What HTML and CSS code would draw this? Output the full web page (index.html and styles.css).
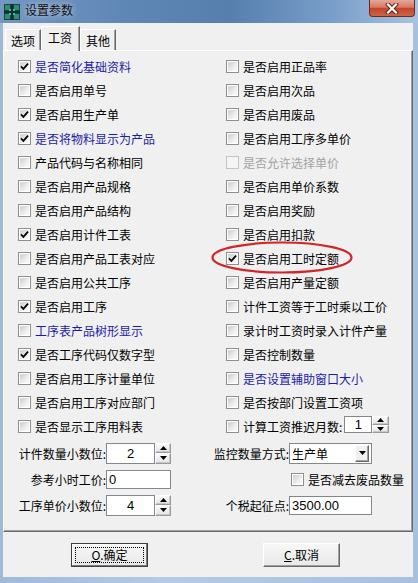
FILE: index.html
```html
<!DOCTYPE html>
<html lang="zh-CN">
<head>
    <meta charset="UTF-8">
    <title>设置参数</title>
    <link rel="stylesheet" href="styles.css">
</head>
<body>
    <div class="window">
        <div class="titlebar">
            <svg class="app-icon" width="16" height="16" viewBox="0 0 16 16">
                <rect x="0" y="0" width="16" height="16" fill="#17463e"/>
                <rect x="1" y="1" width="5" height="5" fill="#2f8c78"/>
                <rect x="10" y="1" width="5" height="5" fill="#2f8c78"/>
                <rect x="1" y="10" width="5" height="5" fill="#2f8c78"/>
                <rect x="10" y="10" width="5" height="5" fill="#2f8c78"/>
                <rect x="5" y="5" width="6" height="6" fill="#4fb39b"/>
                <rect x="7" y="0" width="2" height="16" fill="#0f312b"/>
                <rect x="0" y="7" width="16" height="2" fill="#0f312b"/>
            </svg>
            <span class="title">设置参数</span>
            <div class="close-btn">
                <svg width="14" height="11" viewBox="0 0 14 11">
                    <path d="M3 1.5 L11 9.5 M11 1.5 L3 9.5" stroke="#5a1d16" stroke-width="4" stroke-linecap="square"/>
                    <path d="M3 1.5 L11 9.5 M11 1.5 L3 9.5" stroke="#fff" stroke-width="2.2" stroke-linecap="square"/>
                </svg>
            </div>
        </div>

        <div class="client">
            <div class="tabs">
                <div class="tab">选项</div>
                <div class="tab active">工资</div>
                <div class="tab">其他</div>
            </div>

            <div class="panel">
                <div class="options">
                    <!-- left column -->
                    <label class="opt blue"><span class="cb"><svg viewBox="0 0 9 9"><path d="M1 4.3 L3.4 6.8 L8 1.6"/></svg></span>是否简化基础资料</label>
                    <label class="opt"><span class="cb"></span>是否启用单号</label>
                    <label class="opt"><span class="cb"><svg viewBox="0 0 9 9"><path d="M1 4.3 L3.4 6.8 L8 1.6"/></svg></span>是否启用生产单</label>
                    <label class="opt blue"><span class="cb"><svg viewBox="0 0 9 9"><path d="M1 4.3 L3.4 6.8 L8 1.6"/></svg></span>是否将物料显示为产品</label>
                    <label class="opt"><span class="cb"></span>产品代码与名称相同</label>
                    <label class="opt"><span class="cb"></span>是否启用产品规格</label>
                    <label class="opt"><span class="cb"></span>是否启用产品结构</label>
                    <label class="opt"><span class="cb"><svg viewBox="0 0 9 9"><path d="M1 4.3 L3.4 6.8 L8 1.6"/></svg></span>是否启用计件工表</label>
                    <label class="opt"><span class="cb"></span>是否启用产品工表对应</label>
                    <label class="opt"><span class="cb"></span>是否启用公共工序</label>
                    <label class="opt"><span class="cb"><svg viewBox="0 0 9 9"><path d="M1 4.3 L3.4 6.8 L8 1.6"/></svg></span>是否启用工序</label>
                    <label class="opt blue"><span class="cb"></span>工序表产品树形显示</label>
                    <label class="opt"><span class="cb"><svg viewBox="0 0 9 9"><path d="M1 4.3 L3.4 6.8 L8 1.6"/></svg></span>是否工序代码仅数字型</label>
                    <label class="opt"><span class="cb"></span>是否启用工序计量单位</label>
                    <label class="opt"><span class="cb"></span>是否启用工序对应部门</label>
                    <label class="opt"><span class="cb"></span>是否显示工序用料表</label>

                    <!-- right column -->
                    <label class="opt"><span class="cb"></span>是否启用正品率</label>
                    <label class="opt"><span class="cb"></span>是否启用次品</label>
                    <label class="opt"><span class="cb"></span>是否启用废品</label>
                    <label class="opt"><span class="cb"></span>是否启用工序多单价</label>
                    <label class="opt disabled"><span class="cb"></span>是否允许选择单价</label>
                    <label class="opt"><span class="cb"></span>是否启用单价系数</label>
                    <label class="opt"><span class="cb"></span>是否启用奖励</label>
                    <label class="opt"><span class="cb"></span>是否启用扣款</label>
                    <label class="opt"><span class="cb"><svg viewBox="0 0 9 9"><path d="M1 4.3 L3.4 6.8 L8 1.6"/></svg></span>是否启用工时定额</label>
                    <label class="opt"><span class="cb"></span>是否启用产量定额</label>
                    <label class="opt"><span class="cb"></span>计件工资等于工时乘以工价</label>
                    <label class="opt"><span class="cb"></span>录计时工资时录入计件产量</label>
                    <label class="opt"><span class="cb"></span>是否控制数量</label>
                    <label class="opt blue"><span class="cb"></span>是否设置辅助窗口大小</label>
                    <label class="opt"><span class="cb"></span>是否按部门设置工资项</label>
                    <div class="opt">
                        <span class="cb"></span>计算工资推迟月数:
                        <div class="spin small">
                            <span class="field center">1</span>
                            <span class="spin-btns">
                                <span><svg width="7" height="4" viewBox="0 0 7 4"><path d="M0 4 L3.5 0 L7 4 Z"/></svg></span>
                                <span><svg width="7" height="4" viewBox="0 0 7 4"><path d="M0 0 L7 0 L3.5 4 Z"/></svg></span>
                            </span>
                        </div>
                    </div>
                </div>

                <div class="lower">
                    <div class="row">
                        <span class="lbl left-lbl">计件数量小数位:</span>
                        <div class="spin">
                            <span class="field center">2</span>
                            <span class="spin-btns">
                                <span><svg width="7" height="4" viewBox="0 0 7 4"><path d="M0 4 L3.5 0 L7 4 Z"/></svg></span>
                                <span><svg width="7" height="4" viewBox="0 0 7 4"><path d="M0 0 L7 0 L3.5 4 Z"/></svg></span>
                            </span>
                        </div>
                    </div>
                    <div class="row">
                        <span class="lbl right-lbl">监控数量方式:</span>
                        <div class="select">
                            <span class="select-text">生产单</span>
                            <span class="drop"><svg width="7" height="4" viewBox="0 0 7 4"><path d="M0 0 L7 0 L3.5 4 Z"/></svg></span>
                        </div>
                    </div>
                    <div class="row">
                        <span class="lbl left-lbl">参考小时工价:</span>
                        <span class="field text-in">0</span>
                    </div>
                    <div class="row indent">
                        <label class="opt"><span class="cb"></span>是否减去废品数量</label>
                    </div>
                    <div class="row">
                        <span class="lbl left-lbl">工序单价小数位:</span>
                        <div class="spin">
                            <span class="field center">4</span>
                            <span class="spin-btns">
                                <span><svg width="7" height="4" viewBox="0 0 7 4"><path d="M0 4 L3.5 0 L7 4 Z"/></svg></span>
                                <span><svg width="7" height="4" viewBox="0 0 7 4"><path d="M0 0 L7 0 L3.5 4 Z"/></svg></span>
                            </span>
                        </div>
                    </div>
                    <div class="row">
                        <span class="lbl right-lbl">个税起征点:</span>
                        <span class="field text-in wide">3500.00</span>
                    </div>
                </div>

                <svg class="mark" width="142" height="33" viewBox="0 0 142 33">
                    <ellipse cx="71" cy="16.5" rx="69.5" ry="15" fill="none" stroke="#cf2626" stroke-width="2.2"/>
                </svg>
            </div>

            <div class="actions">
                <div class="btn default"><span class="focus"><u>O</u>.确定</span></div>
                <div class="btn"><span><u>C</u>.取消</span></div>
            </div>
        </div>
    </div>
</body>
</html>
```

FILE: styles.css
```css
body {
    margin: 0;
    font-family: "Liberation Sans", "Noto Sans CJK SC", sans-serif;
    font-size: 12px;
    color: #000;
}
.window {
    width: 418px;
    height: 583px;
    display: flex;
    flex-direction: column;
    background: linear-gradient(90deg, #9fb9d9, #b3cbe6 40%, #a6c0de 100%);
}
.titlebar {
    height: 23px;
    flex-shrink: 0;
    display: flex;
    align-items: flex-start;
    background: linear-gradient(90deg, #7397c2 0%, #5f87b6 30%, #567fae 55%, #7a9fca 80%, #a8c3e1 100%);
}
.app-icon {
    margin: 4px 0 0 4px;
}
.title {
    margin: 3px 0 0 5px;
    line-height: 17px;
    color: #111;
    text-shadow: 0 0 6px rgba(255, 255, 255, 0.8);
}
.close-btn {
    margin-left: auto;
    margin-right: 3px;
    width: 44px;
    height: 16px;
    border: 1px solid #6b2a24;
    border-top: none;
    border-radius: 0 0 4px 4px;
    background: linear-gradient(#e6a797 0%, #d77a65 45%, #c2452d 52%, #cf6445 100%);
    display: flex;
    align-items: center;
    justify-content: center;
}
.client {
    flex: 1;
    margin: 0 5px 6px 3px;
    background: #f0f0f0;
    display: flex;
    flex-direction: column;
    padding-top: 3px;
}
.tabs {
    height: 24px;
    display: flex;
    align-items: flex-end;
    padding-left: 2px;
}
.tab {
    height: 21px;
    box-sizing: border-box;
    padding: 0 5px 0 5px;
    border: 1px solid #fff;
    border-right-color: #696969;
    border-bottom: none;
    box-shadow: inset -1px 0 #a0a0a0;
    display: flex;
    align-items: center;
    font-family: "Noto Sans CJK SC", sans-serif;
}
.tab.active {
    height: 25px;
    margin-bottom: -1px;
    padding: 0 7px 3px 6px;
    position: relative;
    z-index: 1;
    background: #f0f0f0;
}
.panel {
    flex: 1;
    position: relative;
    border: 1px solid #fff;
    border-right-color: #696969;
    border-bottom-color: #696969;
    box-shadow: inset -1px -1px #a0a0a0;
    padding: 3px 0 13px 14px;
}
.options {
    display: grid;
    grid-template-columns: 208px 1fr;
    grid-template-rows: repeat(16, 24px);
    grid-auto-flow: column;
}
.opt {
    display: flex;
    align-items: center;
    white-space: nowrap;
    font-family: "Noto Sans CJK SC", sans-serif;
}
.opt.blue {
    color: #1c1ca8;
}
.opt.disabled {
    color: #a3a3a3;
}
.cb {
    width: 13px;
    height: 13px;
    box-sizing: border-box;
    border: 1px solid #8e8f8f;
    padding: 1px;
    margin-right: 4px;
    flex-shrink: 0;
    background: linear-gradient(135deg, #cbced3, #eceef0 60%, #fafafa) content-box, #fff;
    display: flex;
}
.opt.disabled .cb {
    border-color: #c4c4c4;
    background: #f4f4f4;
}
.cb svg {
    width: 9px;
    height: 9px;
}
.cb path {
    fill: none;
    stroke: #000;
    stroke-width: 1.8;
}
.field {
    box-sizing: border-box;
    background: #fff;
    border: 1px solid #828790;
    display: flex;
    align-items: center;
    font-family: "Liberation Sans", sans-serif;
    font-size: 13px;
}
.field.center {
    justify-content: center;
}
.spin {
    display: flex;
    height: 21px;
}
.spin .field {
    width: 49px;
    height: 100%;
}
.spin.small {
    height: 17px;
    margin: -3px 0 0 2px;
}
.spin.small .field {
    width: 28px;
}
.spin-btns {
    width: 16px;
    display: flex;
    flex-direction: column;
}
.spin.small .spin-btns {
    width: 17px;
}
.spin-btns span {
    flex: 1;
    box-sizing: border-box;
    border: 1px solid #9a9a9a;
    border-top-color: #fff;
    border-left-color: #fff;
    box-shadow: inset -1px -1px #c8c8c8;
    background: linear-gradient(#fafafa, #e4e4e4);
    display: flex;
    align-items: center;
    justify-content: center;
}
.lower {
    margin-top: 2px;
    display: grid;
    grid-template-columns: 192px 1fr;
    grid-auto-rows: 26px;
}
.row {
    display: flex;
    align-items: center;
}
.lbl {
    text-align: right;
    white-space: nowrap;
    font-family: "Noto Sans CJK SC", sans-serif;
}
.left-lbl {
    width: 88px;
}
.right-lbl {
    width: 79px;
}
.row.indent {
    padding-left: 81px;
}
.text-in {
    width: 65px;
    height: 19px;
    padding-left: 2px;
}
.text-in.wide {
    width: 83px;
}
.select {
    width: 83px;
    height: 21px;
    box-sizing: border-box;
    border: 1px solid #828790;
    background: #fff;
    display: flex;
    align-items: center;
}
.select-text {
    flex: 1;
    padding-left: 2px;
    font-family: "Noto Sans CJK SC", sans-serif;
}
.drop {
    width: 14px;
    height: 17px;
    margin-right: 2px;
    box-sizing: border-box;
    border: 1px solid #696969;
    border-top-color: #fff;
    border-left-color: #fff;
    box-shadow: inset -1px -1px #a0a0a0;
    background: #f0f0f0;
    display: flex;
    align-items: center;
    justify-content: center;
}
.mark {
    position: absolute;
    left: 207px;
    top: 190px;
}
.actions {
    height: 45px;
    display: flex;
    align-items: center;
    padding-left: 68px;
    gap: 115px;
}
.btn {
    width: 77px;
    height: 24px;
    box-sizing: border-box;
    border: 1px solid #696969;
    border-top-color: #fff;
    border-left-color: #fff;
    box-shadow: inset -1px -1px #a0a0a0;
    background: linear-gradient(#f7f7f7, #e8e8e8);
    display: flex;
    align-items: center;
    justify-content: center;
    padding: 3px;
    font-family: "Noto Sans CJK SC", sans-serif;
}
.btn.default {
    border: 1px solid #3f3f3f;
    box-shadow: inset -1px -1px #7a7a7a, inset 1px 1px #fff;
}
.btn span {
    flex: 1;
    align-self: stretch;
    display: flex;
    align-items: center;
    justify-content: center;
}
.btn .focus {
    border: 1px dotted #000;
}
```
